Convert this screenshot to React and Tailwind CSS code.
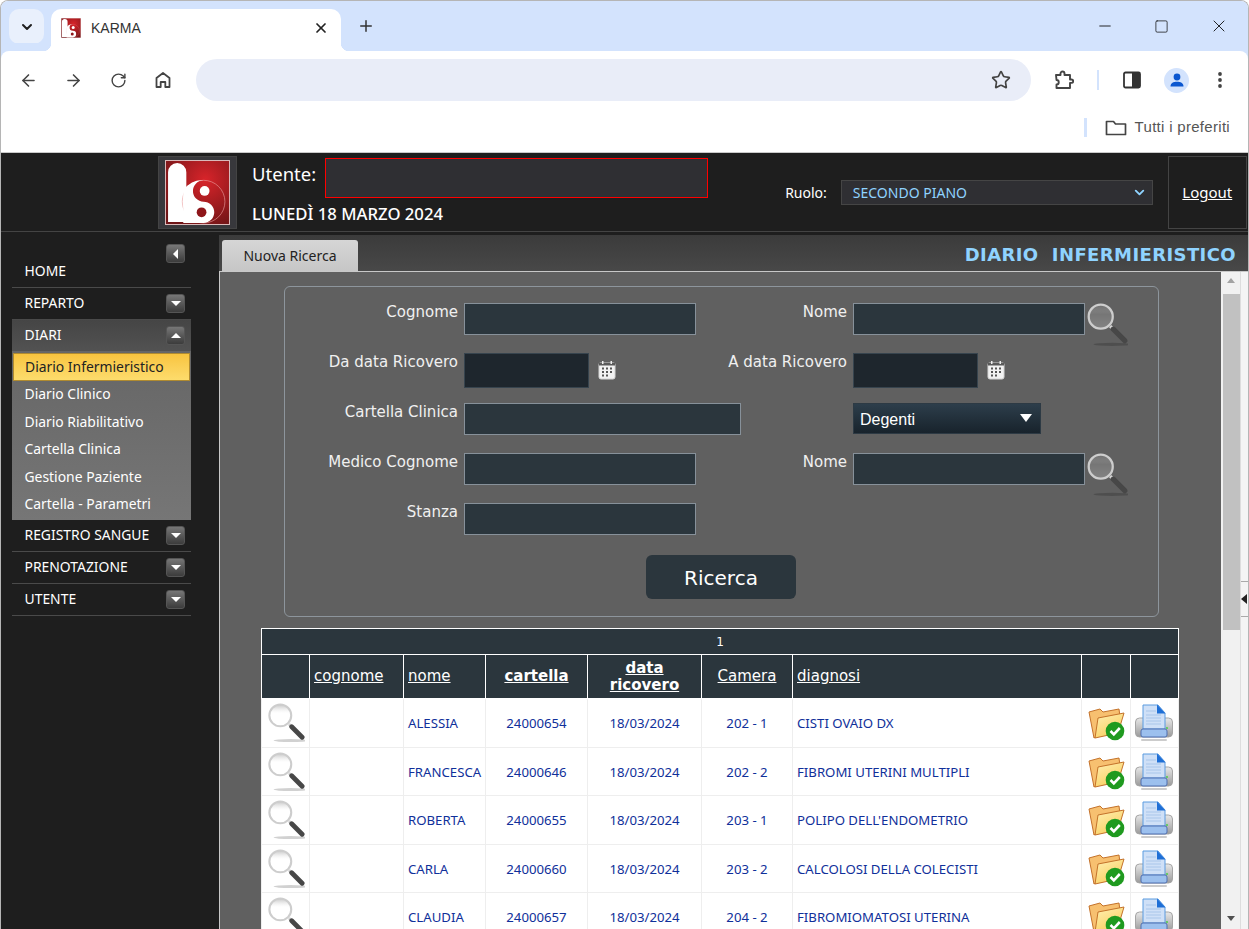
import { ArrowLeft, ArrowRight, RotateCw, Star, X, Plus, ChevronDown, Minus, Square } from "lucide-react";

const rows = [
  { nome: "ALESSIA", cartella: "24000654", camera: "202 - 1", diagnosi: "CISTI OVAIO DX", h: "h-[49px]" },
  { nome: "FRANCESCA", cartella: "24000646", camera: "202 - 2", diagnosi: "FIBROMI UTERINI MULTIPLI", h: "h-[48px]" },
  { nome: "ROBERTA", cartella: "24000655", camera: "203 - 1", diagnosi: "POLIPO DELL'ENDOMETRIO", h: "h-[49px]" },
  { nome: "CARLA", cartella: "24000660", camera: "203 - 2", diagnosi: "CALCOLOSI DELLA COLECISTI", h: "h-[48px]" },
  { nome: "CLAUDIA", cartella: "24000657", camera: "204 - 2", diagnosi: "FIBROMIOMATOSI UTERINA", h: "h-[49px]" },
];

const menuItems = ["Diario Clinico", "Diario Riabilitativo", "Cartella Clinica", "Gestione Paziente", "Cartella - Parametri"];

const Logo = ({ size }) => (
  <svg width={size} height={size} viewBox="0 0 64 64" className="block">
    <defs>
      <radialGradient id="logoRed" cx="0.62" cy="0.3" r="0.8">
        <stop offset="0" stopColor="#d8242a" />
        <stop offset="1" stopColor="#6e1416" />
      </radialGradient>
    </defs>
    <rect x="0.5" y="0.5" width="63" height="63" fill="url(#logoRed)" stroke="#d9b9b9" />
    <path d="M3 61V12a9 9 0 0 1 18 0V61Z" fill="#fff" />
    <circle cx="38" cy="41" r="21" fill="none" stroke="#e9a0a0" strokeWidth="0.6" />
    <path d="M38 20a10.5 10.5 0 0 0 0 21a10.5 10.5 0 0 1 0 21H18V30A21 21 0 0 1 38 20Z" fill="#fff" />
    <circle cx="39" cy="30.5" r="4.8" fill="#fff" />
    <circle cx="36" cy="51.5" r="4.8" fill="#8e161a" />
  </svg>
);

const Magnifier = ({ w, h }) => (
  <svg width={w} height={h} viewBox="0 0 40 44" className="block">
    <defs>
      <linearGradient id="lens" x1="0" y1="0" x2="0" y2="1">
        <stop offset="0" stopColor="#7a7a7a" stopOpacity="0.45" />
        <stop offset="0.4" stopColor="#ffffff" stopOpacity="0.14" />
        <stop offset="1" stopColor="#ffffff" stopOpacity="0.22" />
      </linearGradient>
    </defs>
    <ellipse cx="25" cy="40.5" rx="18" ry="1.6" fill="#000" opacity="0.18" />
    <line x1="23" y1="23" x2="27" y2="27" stroke="#d4d4d4" strokeWidth="3" />
    <line x1="26" y1="26" x2="37" y2="37" stroke="#474747" strokeWidth="5" strokeLinecap="round" />
    <circle cx="14" cy="14" r="11.5" fill="url(#lens)" stroke="#cdcdcd" strokeWidth="2.2" />
  </svg>
);

const Calendar = () => (
  <svg width="18" height="20" viewBox="0 0 18 20" className="block">
    <rect x="1" y="2.5" width="16" height="16.5" rx="2" fill="#f2f2f2" stroke="#d5d5d5" />
    <rect x="1" y="2.5" width="16" height="3" fill="#5a5a5a" />
    <rect x="4" y="1" width="1.5" height="3" fill="#eee" />
    <rect x="12.5" y="1" width="1.5" height="3" fill="#eee" />
    <path d="M4 7.5h2v2H4zM8 7.5h2v2H8zM12 7.5h2v2h-2zM4 11h2v2H4zM8 11h2v2H8zM12 11h2v2h-2zM4 14.5h2v2H4zM8 14.5h2v2H8z" fill="#555" />
  </svg>
);

const FolderCheck = () => (
  <svg width="38" height="36" viewBox="0 0 38 36" className="block">
    <defs>
      <linearGradient id="folderFront" x1="0" y1="0" x2="0.6" y2="1">
        <stop offset="0" stopColor="#fff0b4" />
        <stop offset="1" stopColor="#f9cf60" />
      </linearGradient>
    </defs>
    <path d="M1 7L12 4l3 3 16-3 1 8-24 20L6 33Z" fill="#f7c070" stroke="#c4722a" />
    <path d="M7 33L10 13 36 8 30 28Z" fill="url(#folderFront)" stroke="#c4722a" />
    <circle cx="27" cy="26" r="9.3" fill="#1f9a1f" />
    <path d="M22.5 26l3.3 3.3 6-6.3" fill="none" stroke="#fff" strokeWidth="2.6" />
  </svg>
);

const PrinterIcon = () => (
  <svg width="38" height="38" viewBox="0 0 38 38" className="block">
    <defs>
      <linearGradient id="printerBody" x1="0" y1="0" x2="0" y2="1">
        <stop offset="0" stopColor="#e8e8e8" />
        <stop offset="1" stopColor="#9a9a9a" />
      </linearGradient>
    </defs>
    <rect x="0.5" y="14" width="37" height="19" rx="4" fill="url(#printerBody)" stroke="#a5a5a5" />
    <path d="M8 1h15l7 8v16H8Z" fill="#cfe0f7" stroke="#5b9be0" />
    <path d="M22 0.5l8.5 9H22Z" fill="#1f6fd6" />
    <path d="M11 7h10M11 11h15M11 14h15M11 17h15M11 20h15" stroke="#a9c6ea" />
    <rect x="6" y="25" width="26" height="8" rx="2" fill="#9cc0ee" stroke="#4f6fb0" />
    <circle cx="32" cy="24" r="0.9" fill="#3ecf3e" />
    <rect x="6" y="35" width="26" height="2" rx="1" fill="#000" opacity="0.2" />
  </svg>
);

const ArrowBox = ({ dir = "down" }) => (
  <div className="w-[19px] h-[19px] rounded-[3px] bg-gradient-to-b from-[#777] to-[#3c3c3c] border border-[#555] flex items-center justify-center">
    {dir === "down" && <div className="w-0 h-0 border-x-[5px] border-x-transparent border-t-[5px] border-t-white" />}
    {dir === "up" && <div className="w-0 h-0 border-x-[5px] border-x-transparent border-b-[5px] border-b-white" />}
    {dir === "left" && <div className="w-0 h-0 border-y-[5px] border-y-transparent border-r-[5px] border-r-white" />}
  </div>
);

const MenuRow = ({ label, open }) => (
  <div className={`flex items-center justify-between pl-[12.5px] pr-[6px] ${open ? "h-[31px] bg-gradient-to-b from-[#454545] to-[#525252]" : "h-[32px] border-b border-[#4a4a4a]"}`}>
    <span className="text-[13.9px] text-white">{label}</span>
    <ArrowBox dir={open ? "up" : "down"} />
  </div>
);

const Label = ({ children }) => (
  <div className="flex justify-end whitespace-nowrap pr-[6px] text-[#f0f0f0] text-[15px] leading-[18px] font-['DejaVu_Sans',sans-serif]">{children}</div>
);

const Input = ({ w }) => <div className={`${w} h-[32px] bg-[#2b363d] border border-[#87919a]`} />;

const DateInput = () => (
  <div className="flex items-start">
    <div className="w-[125px] h-[35px] bg-[#1e262d] border border-[#37444e]" />
    <div className="ml-[9px] mt-[7px]"><Calendar /></div>
  </div>
);

const Th = ({ children, bold }) => (
  <th className={`border border-white px-[4px] text-left ${bold ? "font-bold" : "font-normal"}`}>{children}</th>
);

export default function App() {
  return (
    <div className="w-screen h-screen overflow-hidden bg-white flex flex-col font-['Noto_Sans',sans-serif]">
      <div className="flex flex-col h-full border-t border-x border-[#b5b5b5] rounded-t-[8px] overflow-hidden">
        {/* browser tabs */}
        <div className="h-[50px] shrink-0 bg-[#d3e3fd] flex items-end pl-[8px]">
          <div className="self-start mt-[8px] w-[35px] h-[35px] rounded-[10px] bg-[#e9f0fc] flex items-center justify-center">
            <ChevronDown size={16} strokeWidth={3} color="#1f1f1f" />
          </div>
          <div className="relative ml-[7px] w-[290px] h-[42px] bg-white rounded-t-[10px] flex items-center pl-[10px] pr-[12px] pb-[4px]">
            <div className="absolute -left-[8px] bottom-0 w-[8px] h-[8px] bg-[radial-gradient(circle_at_0_0,#d3e3fd_8px,#fff_8.5px)]" />
            <div className="absolute -right-[8px] bottom-0 w-[8px] h-[8px] bg-[radial-gradient(circle_at_100%_0,#d3e3fd_8px,#fff_8.5px)]" />
            <Logo size={20} />
            <span className="ml-[10px] text-[14px] text-[#333] font-['Liberation_Sans',sans-serif]">KARMA</span>
            <X size={16} strokeWidth={2.6} color="#222" className="ml-auto" />
          </div>
          <Plus size={18} strokeWidth={2} color="#333" className="self-start mt-[16px] ml-[16px]" />
          <div className="ml-auto self-start flex items-center mt-[15px] mr-[19px] gap-[40px] text-[#111]">
            <Minus size={18} strokeWidth={1.2} />
            <Square size={15} strokeWidth={1.2} />
            <X size={20} strokeWidth={1.1} />
          </div>
        </div>
        {/* browser toolbar */}
        <div className="h-[58px] shrink-0 bg-white rounded-t-[8px] flex items-center pl-[18px] pr-[19px] shadow-[0_-8px_0_#d3e3fd]">
          <ArrowLeft size={19} color="#444" strokeWidth={2} />
          <ArrowRight size={19} color="#444" strokeWidth={2} className="ml-[26px]" />
          <RotateCw size={17} color="#444" strokeWidth={2} className="ml-[27px]" />
          <svg width="18" height="18" viewBox="0 0 18 18" className="ml-[27px]">
            <path d="M2.5 16V7L9 2l6.5 5v9h-4.2v-5H6.7v5Z" fill="none" stroke="#444" strokeWidth="1.8" strokeLinejoin="round" />
          </svg>
          <div className="ml-[24px] w-[835px] h-[42px] rounded-full bg-[#e9edf8] flex items-center justify-end pr-[20px]">
            <Star size={20} color="#444" strokeWidth={2} />
          </div>
          <svg width="20" height="20" viewBox="0 0 20 20" className="ml-[23px]">
            <path d="M2 5h4.5V3.5a2 2 0 0 1 4 0V5H16v4.5h1.5a1.7 1.7 0 0 1 0 3.4H16V18H2.5v-3.5a2 2 0 0 0 0-4.5Z" fill="none" stroke="#444" strokeWidth="1.9" strokeLinejoin="round" />
          </svg>
          <div className="ml-[23px] w-[2px] h-[20px] bg-[#d3e3fd]" />
          <svg width="18" height="18" viewBox="0 0 18 18" className="ml-[24px]">
            <rect x="1" y="1.5" width="16" height="15" rx="1.5" fill="#fff" stroke="#333" strokeWidth="1.8" />
            <rect x="9" y="1.5" width="8" height="15" fill="#333" />
          </svg>
          <div className="ml-[23px] w-[25px] h-[25px] rounded-full bg-[#d3e3fd] flex items-center justify-center">
            <svg width="16" height="16" viewBox="0 0 16 16">
              <circle cx="8" cy="5" r="3.4" fill="#0b57d0" />
              <path d="M1.5 14.5c0-3.4 3-4.8 6.5-4.8s6.5 1.4 6.5 4.8Z" fill="#0b57d0" />
            </svg>
          </div>
          <svg width="4" height="18" viewBox="0 0 4 18" className="ml-[29px]">
            <circle cx="2" cy="3" r="1.9" fill="#444" />
            <circle cx="2" cy="9" r="1.9" fill="#444" />
            <circle cx="2" cy="15" r="1.9" fill="#444" />
          </svg>
        </div>
        {/* bookmarks */}
        <div className="h-[43px] shrink-0 bg-white flex items-center justify-end pr-[18px] pb-[6px]">
          <div className="w-[3px] h-[19px] bg-[#d3e3fd] mr-[18px]" />
          <svg width="22" height="18" viewBox="0 0 22 18">
            <path d="M1.5 15.5V2.5h7l2 2.5h10v10.5Z" fill="none" stroke="#444" strokeWidth="1.7" strokeLinejoin="round" />
          </svg>
          <span className="ml-[8px] text-[15px] tracking-[0.3px] text-[#555] font-['Liberation_Sans',sans-serif]">Tutti i preferiti</span>
        </div>

        {/* page */}
        <div className="flex-1 min-h-0 flex flex-col border-t border-[#c9c9c9] bg-[#1e1e1e]">
          <div className="h-[79px] shrink-0 border-b border-[#444] flex pl-[157px] pt-[3px]">
            <div className="w-[79px] h-[73px] bg-[#38383c] border border-[#444] flex items-center justify-center">
              <Logo size={65} />
            </div>
            <div className="ml-[15px] flex flex-col">
              <div className="flex items-start">
                <span className="text-[18.5px] text-white pt-[4px] leading-[28px]">Utente:</span>
                <div className="ml-[9px] w-[383px] h-[40px] bg-[#2f2f33] outline outline-1 -outline-offset-1 outline-[#ff0000] mt-[2px]" />
              </div>
              <span className="text-[16.7px] font-medium text-white mt-[4px] leading-[24px]">LUNEDÌ 18 MARZO 2024</span>
            </div>
            <div className="ml-[77px] mt-[24px] flex items-center h-[25px] self-start">
              <span className="text-[14px] text-white">Ruolo:</span>
              <div className="ml-[14px] w-[312px] h-[25px] bg-[#2f2f33] border border-[#454545] flex items-center justify-between pl-[11px] pr-[5px]">
                <span className="text-[14px] text-[#8fd3ff]">SECONDO PIANO</span>
                <ChevronDown size={15} strokeWidth={3} color="#8fd3ff" />
              </div>
            </div>
            <div className="ml-[15px] w-[79px] h-[73px] border border-[#444] flex items-center justify-center">
              <span className="text-[15px] text-white underline">Logout</span>
            </div>
          </div>

          <div className="flex-1 min-h-0 flex">
            {/* sidebar */}
            <div className="w-[218px] shrink-0 pl-[11px]">
              <div className="w-[179px]">
                <div className="h-[56px] border-b border-[#4a4a4a] flex justify-between pl-[12.5px] pr-[6px]">
                  <span className="text-[13.9px] text-white self-end pb-[5px]">HOME</span>
                  <div className="mt-[12px]"><ArrowBox dir="left" /></div>
                </div>
                <MenuRow label="REPARTO" />
                <MenuRow label="DIARI" open />
                <div className="h-[169px] bg-gradient-to-b from-[#666] to-[#767676] pt-[2px] flex flex-col">
                  <div className="mx-[1px] h-[28px] bg-gradient-to-b from-[#f8c43e] to-[#fddc6c] border border-[#b08b30] flex items-center pl-[11px]">
                    <span className="text-[13.9px] text-[#222]">Diario Infermieristico</span>
                  </div>
                  {menuItems.map((m) => (
                    <div key={m} className="h-[27.5px] flex items-center pl-[12.5px] text-[13.9px] text-white">{m}</div>
                  ))}
                </div>
                <MenuRow label="REGISTRO SANGUE" />
                <MenuRow label="PRENOTAZIONE" />
                <MenuRow label="UTENTE" />
              </div>
            </div>

            {/* main */}
            <div className="flex-1 min-w-0 flex flex-col pt-[3px]">
              <div className="h-[37px] shrink-0 bg-gradient-to-b from-[#3b3b3b] to-[#484848] border-b border-[#c8c8c8] flex items-end justify-between pl-[3px] pr-[12px]">
                <div className="w-[136px] h-[31px] bg-gradient-to-b from-[#d6d6d6] to-[#c6c6c6] rounded-t-[3px] flex items-center justify-center text-[14px] text-[#222]">Nuova Ricerca</div>
                <span className="self-center text-[18px] font-bold tracking-[0.4px] text-[#8fd3ff] whitespace-pre font-['DejaVu_Sans',sans-serif] pt-[3px]">DIARIO  INFERMIERISTICO</span>
              </div>
              <div className="flex-1 min-h-0 flex">
                <div className="flex-1 min-w-0 overflow-hidden bg-[#606060] border-l border-[#c8c8c8] pl-[41px] pt-[14px]">
                  {/* search form */}
                  <div className="ml-[23px] w-[875px] h-[331px] border border-[#8d959c] rounded-[6px] pt-[16px]">
                    <div className="grid grid-cols-[179px_277px_112px_1fr] auto-rows-[50px]">
                      <Label>Cognome</Label>
                      <Input w="w-[232px]" />
                      <Label>Nome</Label>
                      <div className="flex items-start"><Input w="w-[232px]" /><div className="-mt-[1px] ml-[1px]"><Magnifier w={42} h={46} /></div></div>

                      <Label>Da data Ricovero</Label>
                      <DateInput />
                      <Label>A data Ricovero</Label>
                      <DateInput />

                      <Label>Cartella Clinica</Label>
                      <Input w="w-[277px]" />
                      <div />
                      <div className="w-[188px] h-[31px] bg-gradient-to-b from-[#2d3e4b] to-[#18232c] border border-[#2d3a44] flex items-center justify-between pl-[6px] pr-[8px]">
                        <span className="text-[16px] pt-[2px] text-white font-['Liberation_Sans',sans-serif]">Degenti</span>
                        <div className="w-0 h-0 -mt-[2px] border-x-[6px] border-x-transparent border-t-[8px] border-t-white" />
                      </div>

                      <Label>Medico Cognome</Label>
                      <Input w="w-[232px]" />
                      <Label>Nome</Label>
                      <div className="flex items-start"><Input w="w-[232px]" /><div className="-mt-[1px] ml-[1px]"><Magnifier w={42} h={46} /></div></div>

                      <Label>Stanza</Label>
                      <Input w="w-[232px]" />
                    </div>
                    <div className="ml-[361px] mt-[2px] w-[150px] h-[44px] rounded-[6px] bg-[#2b363d] flex items-center justify-center pt-[1px] text-[20px] text-white font-['DejaVu_Sans',sans-serif]">Ricerca</div>
                  </div>

                  {/* results */}
                  <table className="mt-[11px] w-[917px] table-fixed border-collapse bg-white">
                    <colgroup>
                      <col className="w-[48px]" />
                      <col className="w-[94px]" />
                      <col className="w-[82px]" />
                      <col className="w-[102px]" />
                      <col className="w-[114px]" />
                      <col className="w-[91px]" />
                      <col className="w-[289px]" />
                      <col className="w-[49px]" />
                      <col className="w-[48px]" />
                    </colgroup>
                    <thead className="bg-[#2b363d] text-white">
                      <tr className="h-[26px]">
                        <th colSpan={9} className="border border-white text-[12px] font-normal font-['DejaVu_Sans',sans-serif]">1</th>
                      </tr>
                      <tr className="h-[44px] text-[15px] leading-[17px] font-['DejaVu_Sans',sans-serif]">
                        <Th />
                        <Th><span className="underline">cognome</span></Th>
                        <Th><span className="underline">nome</span></Th>
                        <Th bold><div className="text-center underline">cartella</div></Th>
                        <Th bold><div className="text-center underline">data<br />ricovero</div></Th>
                        <Th><div className="text-center underline">Camera</div></Th>
                        <Th><span className="underline">diagnosi</span></Th>
                        <Th />
                        <Th />
                      </tr>
                    </thead>
                    <tbody className="text-[13.2px] text-[#10309a] whitespace-nowrap">
                      {rows.map((r) => (
                        <tr key={r.cartella} className={r.h}>
                          <td className="border border-[#eeeeee] pl-[5px]"><Magnifier w={38} h={42} /></td>
                          <td className="border border-[#eeeeee]" />
                          <td className="border border-[#eeeeee] px-[4px] pt-[2px]">{r.nome}</td>
                          <td className="border border-[#eeeeee] text-center pt-[2px]">{r.cartella}</td>
                          <td className="border border-[#eeeeee] text-center pt-[2px]">18/03/2024</td>
                          <td className="border border-[#eeeeee] text-center pt-[2px]">{r.camera}</td>
                          <td className="border border-[#eeeeee] px-[4px] pt-[2px]">{r.diagnosi}</td>
                          <td className="border border-[#eeeeee] pl-[6px]"><FolderCheck /></td>
                          <td className="border border-[#eeeeee] pl-[4px]"><PrinterIcon /></td>
                        </tr>
                      ))}
                    </tbody>
                  </table>
                </div>

                {/* scrollbar */}
                <div className="w-[19px] shrink-0 bg-[#f1f1f1] flex flex-col items-center pt-[6px] pl-[1px]">
                  <div className="w-0 h-0 border-x-[4.5px] border-x-transparent border-b-[5px] border-b-[#a3a3a3]" />
                  <div className="mt-[11px] w-[17px] h-[336px] bg-[#c1c1c1]" />
                  <div className="mt-auto mb-[8px] w-0 h-0 border-x-[4.5px] border-x-transparent border-t-[5px] border-t-[#505050]" />
                </div>
                {/* splitter */}
                <div className="w-[8px] shrink-0 bg-[#f4f4f4] border-l border-[#ddd] flex flex-col pt-[309px]">
                  <div className="h-[1px] bg-[#aaa]" />
                  <div className="h-[34px] flex items-center">
                    <div className="w-0 h-0 border-y-[5px] border-y-transparent border-r-[6px] border-r-[#222]" />
                  </div>
                  <div className="h-[1px] bg-[#aaa]" />
                </div>
              </div>
            </div>
          </div>
        </div>
      </div>
    </div>
  );
}
